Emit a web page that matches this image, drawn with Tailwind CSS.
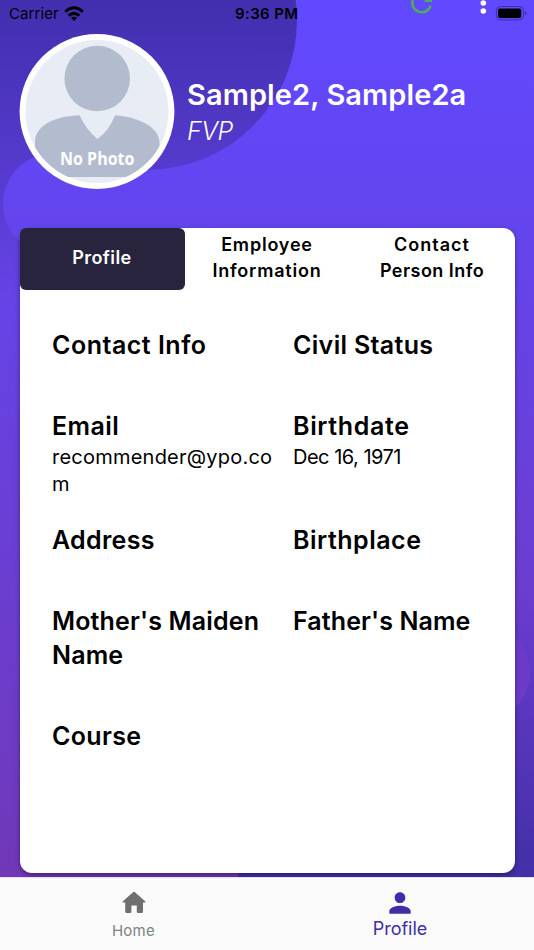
<!DOCTYPE html>
<html lang="en">

<head>
    <meta charset="UTF-8">
    <meta name="viewport" content="width=device-width, initial-scale=1.0">
    <title>Profile</title>
    <script src="https://cdn.jsdelivr.net/npm/@tailwindcss/browser@4"></script>
</head>

<body class="relative w-[534px] h-[950px] overflow-hidden flex flex-col font-['Inter',sans-serif] text-black bg-[#6048ff]">

    <!-- background shapes -->
    <svg class="absolute inset-0" width="534" height="950" viewBox="0 0 534 950">
        <defs>
            <linearGradient id="page" x1="0" y1="0" x2="0" y2="880" gradientUnits="userSpaceOnUse">
                <stop offset="0" stop-color="#6049ff" />
                <stop offset="1" stop-color="#7038b8" />
            </linearGradient>
            <linearGradient id="corner" x1="0" y1="0" x2="0" y2="300" gradientUnits="userSpaceOnUse">
                <stop offset="0" stop-color="#412fae" />
                <stop offset="1" stop-color="#6643e6" />
            </linearGradient>
            <linearGradient id="side" x1="0" y1="600" x2="0" y2="880" gradientUnits="userSpaceOnUse">
                <stop offset="0" stop-color="#6a3cce" />
                <stop offset="1" stop-color="#422fa6" />
            </linearGradient>
        </defs>
        <rect width="534" height="950" fill="url(#page)" />
        <circle cx="147" cy="20" r="150" fill="url(#corner)" />
        <rect x="0" y="0" width="60" height="300" fill="url(#corner)" />
        <circle cx="54" cy="204" r="51" fill="url(#page)" />
        <rect x="238" y="600" width="296" height="280" fill="url(#side)" />
        <circle cx="480" cy="672" r="50" fill="#6c3bc8" />
    </svg>

    <!-- status bar -->
    <header class="relative h-7 shrink-0 flex items-center pl-[9px] text-[15px]">
        <span class="w-[50px] whitespace-nowrap tracking-[0.1px]">Carrier</span>
        <svg class="ml-[5px] -mt-px" width="20" height="16" viewBox="0 0 20 16" fill="none" stroke="#000" stroke-width="3">
            <path d="M1.3 5.6Q10-2.2 18.7 5.6" />
            <path d="M4.7 9.7Q10 5.1 15.3 9.7" />
            <path d="M10 15L6.9 11.8Q10 9.6 13.100 11.8Z" fill="#000" stroke="none" />
        </svg>
        <span class="absolute left-[235px] whitespace-nowrap font-semibold tracking-[0.4px]">9:36 PM</span>
        <svg class="absolute left-[405px] top-0" width="129" height="28" viewBox="405 0 129 28">
            <path d="M412.800 0A9.400 9.400 0 0 0 412.400 3A9.300 9.300 0 0 0 430.600 5.700" fill="none" stroke="#4caf50" stroke-width="2.600" />
            <path d="M423.500 1.900L425.500 0H432V1.900Z" fill="#4caf50" />
            <circle cx="483.300" cy="3" r="2.800" fill="#fff" />
            <circle cx="483.300" cy="11" r="2.800" fill="#fff" />
            <rect x="496.400" y="6.500" width="27" height="13.400" rx="4" fill="none" stroke="#3c2ea5" />
            <rect x="498" y="8.500" width="23.200" height="9.500" rx="2" />
            <path d="M525 11Q526.500 11.500 526.500 13.200T525 15.500Z" fill="#3c2ea5" />
        </svg>
    </header>

    <section class="relative h-[199.500px] shrink-0 flex pl-[19px]">
        <svg class="mt-[6px]" width="156" height="156" viewBox="19 34 156 156">
            <defs>
                <clipPath id="avatar"><circle cx="97" cy="111.500" r="71.500" /></clipPath>
            </defs>
            <circle cx="97" cy="111.500" r="77.400" fill="#fff" />
            <g clip-path="url(#avatar)">
                <rect x="19" y="34" width="156" height="156" fill="#e8ecf4" />
                <circle cx="97.200" cy="78.500" r="32.800" fill="#b3bccf" />
                <path d="M35 177V141C36 125 56 116 79.500 115.300Q87 131 97.500 139Q109 131 115 115.300C139 117 158 127 159.500 141V177Z" fill="#b3bccf" />
            </g>
            <text x="60" y="165.400" textLength="74.500" lengthAdjust="spacingAndGlyphs" class="font-['Open_Sans',sans-serif] font-bold text-[17px]" fill="#fff">No Photo</text>
        </svg>
        <div class="pt-[47px] pl-[12px] text-white">
            <h1 class="text-[29px] leading-[40px] font-semibold tracking-[0.1px] whitespace-nowrap">Sample2, Sample2a</h1>
            <p class="text-[25px] leading-[32px] italic font-light tracking-[-0.5px]">FVP</p>
        </div>
    </section>

    <main class="relative mx-[19.500px] h-[645px] shrink-0 rounded-[12px] bg-white shadow-[0_2px_5px_rgba(0,0,0,0.4)]">
        <nav class="grid grid-cols-3 h-[62px] text-center text-[18px] leading-[26px] font-semibold">
            <div class="h-[62px] pb-[2px] rounded-[6px] bg-[#28243d] text-white flex items-center justify-center tracking-[0.4px]">Profile</div>
            <div class="h-[60px] flex items-center justify-center tracking-[0.8px]">Employee<br>Information</div>
            <div class="h-[60px] flex flex-col items-center justify-center"><span class="tracking-[1px]">Contact</span><span class="tracking-[0.45px]">Person Info</span></div>
        </nav>
        <div class="grid grid-cols-[241px_1fr] pl-[32.500px] pt-[38.500px] text-[20px] leading-[27px]">
            <div class="h-[81px]"><h2 class="text-[25px] leading-[34px] font-semibold tracking-[0.5px]">Contact Info</h2></div>
            <div><h2 class="text-[25px] leading-[34px] font-semibold tracking-[0.33px]">Civil Status</h2></div>
            <div class="h-[114px]"><h2 class="mb-px text-[25px] leading-[34px] font-semibold tracking-[0.4px]">Email</h2><p class="tracking-[0.23px]">recommender@ypo.co<br>m</p></div>
            <div><h2 class="mb-px text-[25px] leading-[34px] font-semibold tracking-[0.65px]">Birthdate</h2><p class="tracking-[-0.5px]">Dec 16, 1971</p></div>
            <div class="h-[81px]"><h2 class="text-[25px] leading-[34px] font-semibold tracking-[0.3px]">Address</h2></div>
            <div><h2 class="text-[25px] leading-[34px] font-semibold tracking-[0.5px]">Birthplace</h2></div>
            <div class="h-[115px]"><h2 class="text-[25px] leading-[34px] font-semibold tracking-[0.15px]">Mother's Maiden<br>Name</h2></div>
            <div><h2 class="text-[25px] leading-[34px] font-semibold tracking-[0.1px]">Father's Name</h2></div>
            <div><h2 class="text-[25px] leading-[34px] font-semibold tracking-[0.35px]">Course</h2></div>
        </div>
    </main>

    <footer class="relative mt-auto h-[73px] grid grid-cols-2 border-t border-[#e4dcf2] bg-[#fafafa]">
        <div class="flex flex-col items-center pt-[13px] text-[#6f6f6f]">
            <svg width="24" height="22" viewBox="0 0 24 22" fill="currentColor"><path d="M11.300 1.100Q12 .5 12.700 1.100L23.400 10.500Q23.900 11.400 22.900 11.400H21V20.500Q21 22 19.500 22H16Q14.800 22 14.800 20.800V14.500H9.400V20.800Q9.400 22 8.200 22H4.700Q3.200 22 3.200 20.500V11.400H1.100Q.1 11.400.6 10.500Z" /></svg>
            <span class="mt-[4.500px] text-[15px] leading-[26px] tracking-[0.3px] text-[#828282]">Home</span>
        </div>
        <div class="flex flex-col items-center pt-[9px] pr-px text-[#422da6]">
            <svg width="32" height="32" viewBox="0 0 24 24" fill="currentColor"><path d="M12 12c2.210 0 4-1.790 4-4s-1.790-4-4-4-4 1.790-4 4 1.790 4 4 4zm0 2c-2.670 0-8 1.340-8 4v2h16v-2c0-2.660-5.330-4-8-4z" /></svg>
            <span class="-mt-[2px] text-[18px] leading-[24px]">Profile</span>
        </div>
    </footer>
</body>

</html>
